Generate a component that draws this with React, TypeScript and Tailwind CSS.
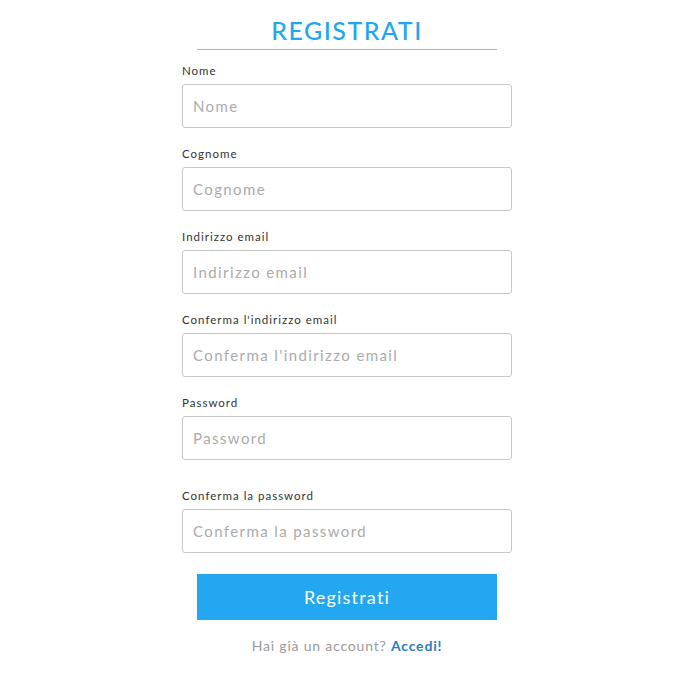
const fields = [
  { label: "Nome", type: "text" },
  { label: "Cognome", type: "text" },
  { label: "Indirizzo email", type: "email" },
  { label: "Conferma l'indirizzo email", type: "email" },
  { label: "Password", type: "password" },
  { label: "Conferma la password", type: "password" },
];

export default function App() {
  return (
    <div className="min-h-[675px] bg-white pr-[6px] font-['Lato',sans-serif]">
      <div className="mx-auto w-[330px] pt-[14px]">
        <div className="mx-auto w-[300px] border-b border-[#b5b5b5] pb-[3px] text-center">
          <h1 className="text-[25px] leading-[32px] font-medium tracking-[1.5px] text-[#22a6ee]">REGISTRATI</h1>
        </div>

        <form className="mt-[13px] flex flex-col" onSubmit={(e) => e.preventDefault()}>
          {fields.map((f, i) => (
            <div key={f.label} className={i === 5 ? "mt-[28px]" : i > 0 ? "mt-[18px]" : ""}>
              <label className="block text-[11.5px] leading-[16px] tracking-[1px] text-[#333]">
                {f.label}
              </label>
              <input
                type={f.type}
                placeholder={f.label}
                className="mt-[5px] block h-[44px] w-full rounded-[3px] border border-[#c8c8c8] px-[10px] text-[15px] tracking-[1.4px] text-[#555] outline-none placeholder:text-[#ababab]"
              />
            </div>
          ))}

          <button
            type="submit"
            className="mx-auto mt-[21px] h-[46px] w-[300px] bg-[#22a7f0] text-[18px] tracking-[1.2px] text-white"
          >
            Registrati
          </button>
        </form>

        <p className="mt-[15px] text-center text-[14px] tracking-[0.8px] text-[#9a9a9a]">
          Hai già un account? <a href="#" className="font-bold text-[#2b7cc0]">Accedi!</a>
        </p>
      </div>
    </div>
  );
}
